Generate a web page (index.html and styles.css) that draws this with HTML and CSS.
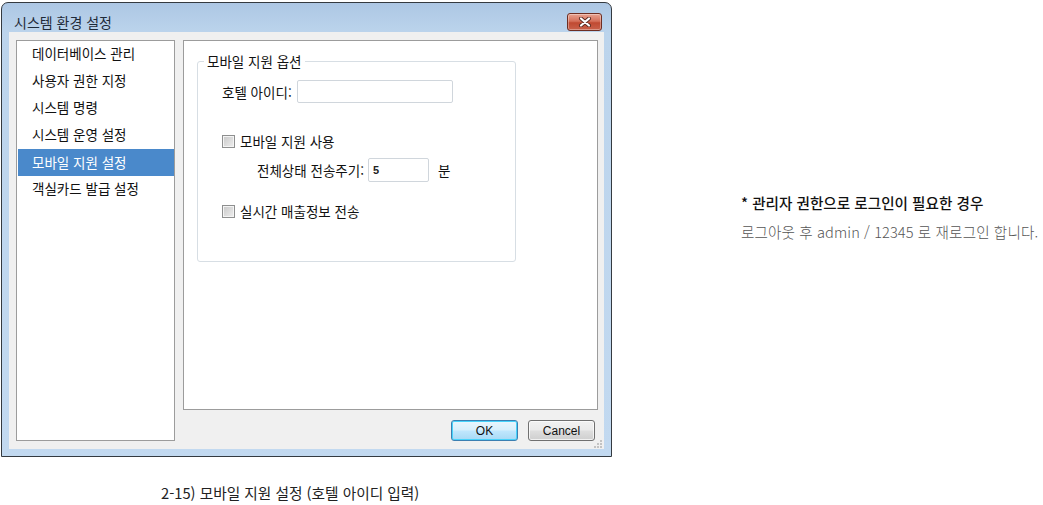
FILE: index.html
```html
<!DOCTYPE html>
<html lang="ko">
  <head>
    <meta charset="UTF-8" />
    <meta name="viewport" content="width=device-width, initial-scale=1.0" />
    <title>모바일 지원 설정</title>
    <link rel="stylesheet" href="styles.css">
  </head>
  <body>
    <div class="page">
      <div class="figure">
        <div class="window">
          <div class="titlebar">
            <span class="title">시스템 환경 설정</span>
            <button class="close-btn" aria-label="닫기">
              <svg width="14" height="10" viewBox="0 0 14 10">
                <path d="M3 1.5 L11 8.5 M11 1.5 L3 8.5" stroke="#5a2a22" stroke-width="4" stroke-linecap="round" />
                <path d="M3 1.5 L11 8.5 M11 1.5 L3 8.5" stroke="#ffffff" stroke-width="2.2" stroke-linecap="round" />
              </svg>
            </button>
          </div>

          <div class="client">
            <ul class="menu">
              <li>데이터베이스 관리</li>
              <li>사용자 권한 지정</li>
              <li>시스템 명령</li>
              <li>시스템 운영 설정</li>
              <li class="selected">모바일 지원 설정</li>
              <li>객실카드 발급 설정</li>
            </ul>

            <div class="side">
              <div class="panel">
                <fieldset class="group">
                  <legend>모바일 지원 옵션</legend>
                  <div class="row row-id">
                    <label for="hotel_id">호텔 아이디:</label>
                    <input type="text" id="hotel_id" class="text-input id-input" />
                  </div>
                  <div class="row row-check first-check">
                    <span class="check"></span>
                    <span>모바일 지원 사용</span>
                  </div>
                  <div class="row row-interval">
                    <label for="interval">전체상태 전송주기:</label>
                    <input type="text" id="interval" class="text-input interval-input" value="5" />
                    <span class="unit">분</span>
                  </div>
                  <div class="row row-check second-check">
                    <span class="check"></span>
                    <span>실시간 매출정보 전송</span>
                  </div>
                </fieldset>
              </div>

              <div class="actions">
                <button class="btn btn-ok">OK</button>
                <button class="btn">Cancel</button>
              </div>
            </div>

            <!-- size grip -->
            <svg class="grip" width="10" height="10" viewBox="0 0 10 10">
              <rect x="7" y="1" width="2" height="2" fill="#c3c3c3" />
              <rect x="4" y="4" width="2" height="2" fill="#c3c3c3" />
              <rect x="7" y="4" width="2" height="2" fill="#c3c3c3" />
              <rect x="1" y="7" width="2" height="2" fill="#c3c3c3" />
              <rect x="4" y="7" width="2" height="2" fill="#c3c3c3" />
              <rect x="7" y="7" width="2" height="2" fill="#c3c3c3" />
            </svg>
          </div>
        </div>

        <p class="caption">2-15) 모바일 지원 설정 (호텔 아이디 입력)</p>
      </div>

      <div class="note">
        <p class="note-title">* 관리자 권한으로 로그인이 필요한 경우</p>
        <p class="note-body">로그아웃 후 admin / 12345 로 재로그인 합니다.</p>
      </div>
    </div>
  </body>
</html>
```

FILE: styles.css
```css
body {
    margin: 0;
    background-color: #fff;
    font-family: "Noto Sans CJK KR", "Noto Sans", sans-serif;
    color: #111;
}

.page {
    display: flex;
}

/* Left column: dialog + caption */
.figure {
    padding: 2px 0 0 1px;
    width: 612px;
}

.window {
    width: 611px;
    height: 455px;
    box-sizing: border-box;
    border: 1px solid #343a40;
    border-radius: 7px 7px 0 0;
    background: linear-gradient(#adc7e4, #bcd4ec 30px, #c2d9f0);
}

/* Title bar */
.titlebar {
    height: 29px;
    box-sizing: border-box;
    padding: 8px 9px 0 12px;
    display: flex;
    align-items: center;
    justify-content: space-between;
}

.title {
    font-size: 14px;
    line-height: 18px;
    color: #1e2a38;
}

.close-btn {
    width: 35px;
    height: 18px;
    padding: 0;
    border: 1px solid #6e2e22;
    border-radius: 3px;
    background: linear-gradient(#e8a390, #d5705a 45%, #c04a32 55%, #c9614a);
    box-shadow: inset 0 0 0 1px rgba(255, 255, 255, 0.35);
    display: flex;
    align-items: center;
    justify-content: center;
}

/* Client area */
.client {
    position: relative;
    margin: 0 7px;
    height: 417px;
    box-sizing: border-box;
    padding: 8px 6px 8px 7px;
    background-color: #f0f0f0;
    display: flex;
    gap: 8px;
}

.menu {
    list-style: none;
    margin: 0;
    padding: 0;
    width: 159px;
    box-sizing: border-box;
    background-color: #fff;
    border: 1px solid #9c9c9c;
}

.menu li {
    height: 27px;
    padding-left: 15px;
    font-size: 13.5px;
    line-height: 25px;
    color: #111;
}

.menu li.selected {
    margin-left: 1px;
    padding-left: 14px;
    line-height: 26px;
    background-color: #4a89cb;
    color: #fff;
}

.side {
    flex: 1;
    display: flex;
    flex-direction: column;
}

.panel {
    height: 370px;
    box-sizing: border-box;
    padding: 12px 0 0 13px;
    background-color: #fff;
    border: 1px solid #9c9c9c;
}

/* Group box */
.group {
    width: 319px;
    height: 209px;
    box-sizing: border-box;
    margin: 0;
    padding: 0 0 0 24px;
    border: 1px solid #d7dee4;
    border-radius: 3px;
}

.group legend {
    margin-left: -18px;
    padding: 0 3px;
    font-size: 13.5px;
    line-height: 16px;
    color: #111;
}

.row {
    display: flex;
    align-items: center;
    font-size: 13.5px;
    color: #111;
}

.row-id {
    margin-top: 11px;
    gap: 5px;
}

.first-check {
    margin-top: 30px;
    height: 16px;
    gap: 5px;
}

.row-interval {
    margin-top: 9px;
    padding-left: 35px;
    gap: 4px;
}

.second-check {
    margin-top: 21px;
    height: 16px;
    gap: 5px;
}

.text-input {
    height: 23px;
    box-sizing: border-box;
    margin: 0;
    border: 1px solid #d0d6dc;
    border-radius: 2px;
    background-color: #fff;
    font-family: "Liberation Sans", Arial, sans-serif;
    font-size: 11px;
    font-weight: bold;
    color: #222;
}

.id-input {
    width: 156px;
}

.interval-input {
    width: 61px;
    height: 24px;
    padding-left: 4px;
}

.unit {
    margin-left: 5px;
}

.check {
    width: 13px;
    height: 13px;
    box-sizing: border-box;
    border: 1px solid #8e8f8f;
    background: linear-gradient(135deg, #c8c8c8, #eeeeee);
    box-shadow: inset 0 0 0 1px #f4f4f4;
}

/* Dialog buttons */
.actions {
    margin-top: 10px;
    padding-right: 3px;
    display: flex;
    justify-content: flex-end;
    gap: 10px;
}

.btn {
    width: 67px;
    height: 21px;
    padding: 0;
    border: 1px solid #707070;
    border-radius: 3px;
    background: linear-gradient(#f2f2f2, #ebebeb 45%, #dddddd 55%, #cfcfcf);
    box-shadow: inset 0 0 0 1px rgba(255, 255, 255, 0.7);
    font-family: "Liberation Sans", Arial, sans-serif;
    font-size: 12px;
    color: #111;
}

.btn-ok {
    border-color: #3c7fb1;
    background: linear-gradient(#eaf6fd, #d9f0fc 45%, #bee6fd 55%, #a7d9f5);
    box-shadow: inset 0 0 0 1px #48d3fb;
}

.grip {
    position: absolute;
    right: 1px;
    bottom: 0;
}

/* Caption under the dialog */
.caption {
    margin: 26px 0 0 160px;
    font-size: 14.7px;
    line-height: 20px;
    color: #222;
}

/* Note on the right */
.note {
    margin: 188px 0 0 128px;
}

.note p {
    margin: 0;
    line-height: 29px;
    white-space: nowrap;
}

.note-title {
    font-size: 14.6px;
    font-weight: 500;
    color: #111;
}

.note-body {
    font-size: 14.6px;
    font-weight: 300;
    letter-spacing: 0.1px;
    color: #555;
}
```
